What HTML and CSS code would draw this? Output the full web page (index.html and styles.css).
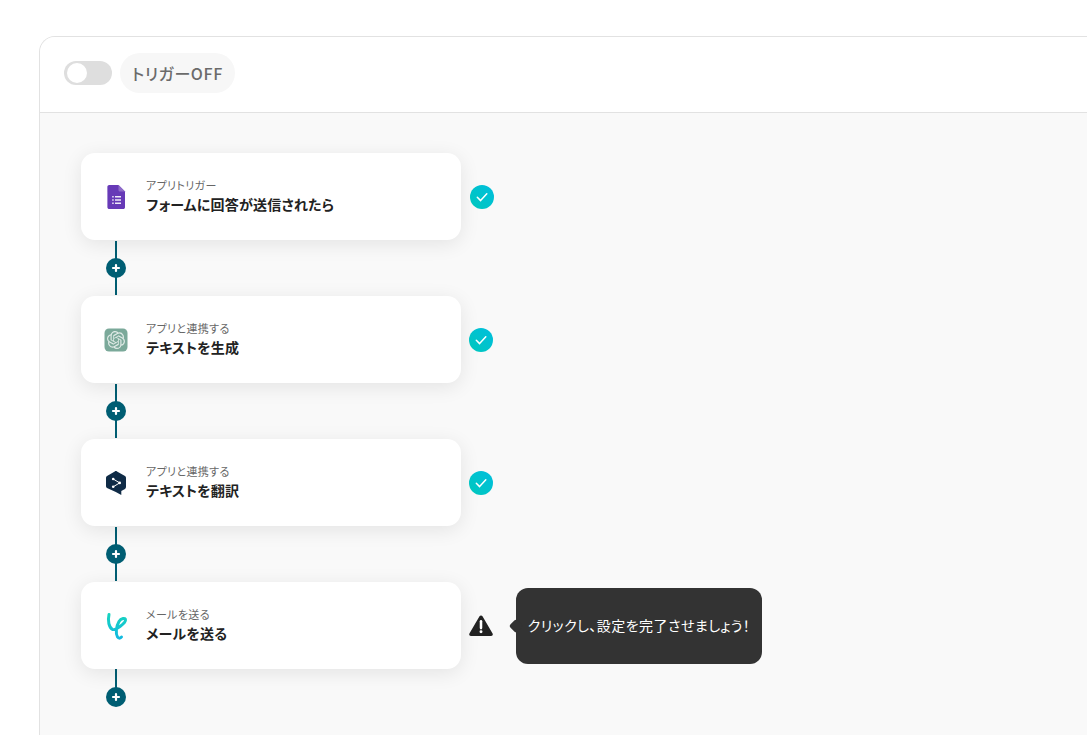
FILE: index.html
```html
<!DOCTYPE html>
<html lang="ja">
<head>
<meta charset="utf-8">
<title>フロー</title>
<link rel="stylesheet" href="styles.css">
</head>
<body>
<main class="panel">
  <header class="panel-head">
    <span class="toggle"><span class="knob"></span></span>
    <span class="trigger-label">トリガーOFF</span>
  </header>
  <section class="flow">
    <div class="step">
      <a class="card">
        <span class="icon">
          <svg width="24" height="24" viewBox="0 0 24 24"><path d="M5.200 0h9.300L21 6.600v15.600c0 1-.8 1.800-1.800 1.800H5.200c-1 0-1.800-.8-1.800-1.800V1.800C3.400.8 4.200 0 5.200 0z" fill="#673ab7"/><path d="M14.500 0v5c0 1 .6 1.600 1.600 1.600H21z" fill="#8f6cc9"/><path d="M8.200 11h1.500v1.500H8.200zM11 11h6v1.500h-6zM8.200 14.200h1.500v1.500H8.200zM11 14.200h6v1.500h-6zM8.200 17.400h1.500v1.500H8.200zM11 17.400h6v1.500h-6z" fill="#efe9f8"/></svg>
        </span>
        <span class="texts">
          <span class="label">アプリトリガー</span>
          <span class="title">フォームに回答が送信されたら</span>
        </span>
      </a>
      <span class="status check first"><svg width="24" height="24" viewBox="0 0 24 24"><path d="M7.300 12.300l3.300 3.300 6.200-6.800" fill="none" stroke="#fff" stroke-width="1.500" stroke-linecap="round" stroke-linejoin="round"/></svg></span>
    </div>
    <div class="link"><span class="plus"><svg width="10" height="10" viewBox="0 0 10 10"><path d="M5 2v6M2 5h6" stroke="#fff" stroke-width="2.200" stroke-linecap="round"/></svg></span></div>

    <div class="step">
      <a class="card">
        <span class="icon">
          <svg width="24" height="24" viewBox="0 0 24 24"><rect x=".5" y=".5" width="23" height="23" rx="4.500" fill="#7ba99a"/><path transform="translate(3 3) scale(.75)" fill="#dfeae6" d="M22.2819 9.8211a5.9847 5.9847 0 0 0-.5157-4.9108 6.0462 6.0462 0 0 0-6.5098-2.9A6.0651 6.0651 0 0 0 4.9807 4.1818a5.9847 5.9847 0 0 0-3.9977 2.9 6.0462 6.0462 0 0 0 .7427 7.0966 5.98 5.98 0 0 0 .511 4.9107 6.051 6.051 0 0 0 6.5146 2.9001A5.9847 5.9847 0 0 0 13.2599 24a6.0557 6.0557 0 0 0 5.7718-4.2058 5.9894 5.9894 0 0 0 3.9977-2.9001 6.0557 6.0557 0 0 0-.7475-7.0729zm-9.022 12.6081a4.4755 4.4755 0 0 1-2.8764-1.0408l.1419-.0804 4.7783-2.7582a.7948.7948 0 0 0 .3927-.6813v-6.7369l2.02 1.1686a.071.071 0 0 1 .038.052v5.5826a4.504 4.504 0 0 1-4.4945 4.4944zm-9.6607-4.1254a4.4708 4.4708 0 0 1-.5346-3.0137l.142.0852 4.783 2.7582a.7712.7712 0 0 0 .7806 0l5.8428-3.3685v2.3324a.0804.0804 0 0 1-.0332.0615L9.74 19.9502a4.4992 4.4992 0 0 1-6.1408-1.6464zM2.3408 7.8956a4.485 4.485 0 0 1 2.3655-1.9728V11.6a.7664.7664 0 0 0 .3879.6765l5.8144 3.3543-2.0201 1.1685a.0757.0757 0 0 1-.071 0l-4.8303-2.7865A4.504 4.504 0 0 1 2.3408 7.872zm16.5963 3.8558L13.1038 8.364 15.1192 7.2a.0757.0757 0 0 1 .071 0l4.8303 2.7913a4.4944 4.4944 0 0 1-.6765 8.1042v-5.6772a.79.79 0 0 0-.407-.667zm2.0107-3.0231l-.142-.0852-4.7735-2.7818a.7759.7759 0 0 0-.7854 0L9.409 9.2297V6.8974a.0662.0662 0 0 1 .0284-.0615l4.8303-2.7866a4.4992 4.4992 0 0 1 6.6802 4.66zM8.3065 12.863l-2.02-1.1638a.0804.0804 0 0 1-.038-.0567V6.0742a4.4992 4.4992 0 0 1 7.3757-3.4537l-.142.0805L8.704 5.459a.7948.7948 0 0 0-.3927.6813zm1.0976-2.3654l2.602-1.4998 2.6069 1.4998v2.9994l-2.5974 1.4997-2.6067-1.4997Z"/></svg>
        </span>
        <span class="texts">
          <span class="label">アプリと連携する</span>
          <span class="title">テキストを生成</span>
        </span>
      </a>
      <span class="status check"><svg width="24" height="24" viewBox="0 0 24 24"><path d="M7.300 12.300l3.300 3.300 6.200-6.800" fill="none" stroke="#fff" stroke-width="1.500" stroke-linecap="round" stroke-linejoin="round"/></svg></span>
    </div>
    <div class="link"><span class="plus"><svg width="10" height="10" viewBox="0 0 10 10"><path d="M5 2v6M2 5h6" stroke="#fff" stroke-width="2.200" stroke-linecap="round"/></svg></span></div>

    <div class="step">
      <a class="card">
        <span class="icon">
          <svg width="24" height="24" viewBox="0 0 24 24"><path d="M10.800.4c.7-.4 1.500-.4 2.200 0l8 4.600c.6.400 1 1 1 1.800v9.300c0 .8-.4 1.400-1 1.800l-3.700 2.100V24l-5.500-3-8.800-3.900c-.6-.4-1-1-1-1.800V6.800c0-.8.4-1.400 1-1.800z" fill="#0f2b46"/><path d="M9.200 8l6.500 3.900-6.500 3.900" fill="none" stroke="#fff" stroke-width="1"/><circle cx="9.200" cy="8" r="1.300" fill="#fff"/><circle cx="9.200" cy="15.800" r="1.300" fill="#fff"/><circle cx="15.700" cy="11.900" r="1.300" fill="#fff"/></svg>
        </span>
        <span class="texts">
          <span class="label">アプリと連携する</span>
          <span class="title">テキストを翻訳</span>
        </span>
      </a>
      <span class="status check"><svg width="24" height="24" viewBox="0 0 24 24"><path d="M7.300 12.300l3.300 3.300 6.200-6.800" fill="none" stroke="#fff" stroke-width="1.500" stroke-linecap="round" stroke-linejoin="round"/></svg></span>
    </div>
    <div class="link"><span class="plus"><svg width="10" height="10" viewBox="0 0 10 10"><path d="M5 2v6M2 5h6" stroke="#fff" stroke-width="2.200" stroke-linecap="round"/></svg></span></div>

    <div class="step">
      <a class="card">
        <span class="icon">
          <svg width="24" height="28" viewBox="0 0 24 28"><defs><linearGradient id="mailgrad" x1="0" y1="0" x2="0" y2="1"><stop offset="0" stop-color="#17d3bf"/><stop offset="1" stop-color="#12b9e0"/></linearGradient></defs><path d="M5 2.500C3.500 9 5 15.500 8.500 17.500c3.500 1 13-6.500 13-9.500 0-2.500-4.500-2-6.500 1.500-3 5-3.500 12.500-1.500 15.500 1 1.500 3 1.500 4 0" fill="none" stroke="url(#mailgrad)" stroke-width="3" stroke-linecap="round" stroke-linejoin="round"/></svg>
        </span>
        <span class="texts">
          <span class="label">メールを送る</span>
          <span class="title">メールを送る</span>
        </span>
      </a>
      <span class="status warn"><svg width="24" height="22" viewBox="0.700 1.200 22.600 20.600"><path d="M12 1.500c.6 0 1.100.3 1.400.8l9.500 16.200c.6 1.100-.1 2.500-1.400 2.500H2.500c-1.300 0-2-1.400-1.400-2.500l9.500-16.200c.3-.5.800-.8 1.400-.8z" fill="#222"/><path d="M12 7v6.500" stroke="#fff" stroke-width="2.400" stroke-linecap="round"/><circle cx="12" cy="17" r="1.400" fill="#fff"/></svg></span>
      <div class="tooltip">クリックし、設定を完了させましょう！</div>
    </div>
    <div class="link last"><span class="plus"><svg width="10" height="10" viewBox="0 0 10 10"><path d="M5 2v6M2 5h6" stroke="#fff" stroke-width="2.200" stroke-linecap="round"/></svg></span></div>
  </section>
</main>
</body>
</html>
```

FILE: styles.css
```css
* { box-sizing: border-box; }
html, body { margin: 0; height: 100%; overflow: hidden; background: #fff; }
body {
  padding: 36px 0 0 39px;
  font-family: "Noto Sans CJK JP", "Noto Sans", sans-serif;
  font-feature-settings: "palt";
}
.panel {
  height: 100%;
  border: 1px solid #e2e2e2;
  border-width: 1px 0 0 1px;
  border-radius: 16px 0 0 0;
  overflow: hidden;
  background: #f9f9f9;
}
.panel-head {
  height: 76px;
  padding: 0 0 4px 24px;
  display: flex;
  align-items: center;
  gap: 8px;
  background: #fff;
  border-bottom: 1px solid #e2e2e2;
}
.toggle {
  width: 48px;
  height: 24px;
  border-radius: 12px;
  background: #dedede;
  padding: 2px 3px;
  display: block;
}
.knob {
  display: block;
  width: 20px;
  height: 20px;
  border-radius: 50%;
  background: #fff;
}
.trigger-label {
  height: 40px;
  padding: 0 12px;
  border-radius: 20px;
  background: #f7f7f7;
  color: #6b6b6b;
  font-size: 16px;
  font-weight: 500;
  line-height: 40px;
  letter-spacing: .6px;
}
.flow {
  padding: 40px 0 0 41px;
  display: flex;
  flex-direction: column;
}
.step {
  position: relative;
  display: flex;
  align-items: center;
  height: 87px;
}
.card {
  width: 380px;
  height: 87px;
  padding: 0 0 0 23px;
  display: flex;
  align-items: center;
  gap: 18px;
  background: #fff;
  border-radius: 14px;
  box-shadow: 0 4px 20px rgba(0, 0, 0, .09);
}
.icon {
  width: 24px;
  height: 28px;
  display: flex;
  align-items: center;
  justify-content: center;
}
.icon svg { display: block; }
.texts {
  display: flex;
  flex-direction: column;
  gap: 1px;
  padding-bottom: 2px;
}
.label {
  font-size: 11px;
  line-height: 16px;
  color: #666;
  letter-spacing: .35px;
}
.title {
  font-size: 14px;
  line-height: 20px;
  font-weight: 700;
  color: #222;
  letter-spacing: .2px;
}
.status { display: block; margin-left: 8px; }
.status.first { margin-left: 9px; }
.check {
  width: 24px;
  height: 24px;
  border-radius: 50%;
  background: linear-gradient(45deg, #00c8bc, #00bede);
}
.check svg, .warn svg { display: block; }
.warn { width: 24px; height: 22px; }
.tooltip {
  position: absolute;
  left: 435px;
  top: 6px;
  width: 246px;
  height: 76px;
  display: flex;
  align-items: center;
  justify-content: center;
  padding-bottom: 2px;
  border-radius: 12px;
  background: #333;
  color: #fff;
  font-size: 14px;
  letter-spacing: .45px;
  white-space: nowrap;
}
.tooltip::before {
  content: "";
  position: absolute;
  left: -5px;
  top: 33px;
  width: 10px;
  height: 10px;
  background: #333;
  transform: rotate(45deg);
  border-radius: 2px;
}
.link {
  height: 56px;
  width: 70px;
  display: flex;
  align-items: center;
  justify-content: center;
  background: linear-gradient(#005e73, #005e73) center / 2px 54px no-repeat;
}
.link.last { background-size: 2px 28px; background-position: center top; }
.plus {
  width: 20px;
  height: 20px;
  border-radius: 50%;
  background: #005e73;
  display: flex;
  align-items: center;
  justify-content: center;
}
.plus svg { display: block; }
```
